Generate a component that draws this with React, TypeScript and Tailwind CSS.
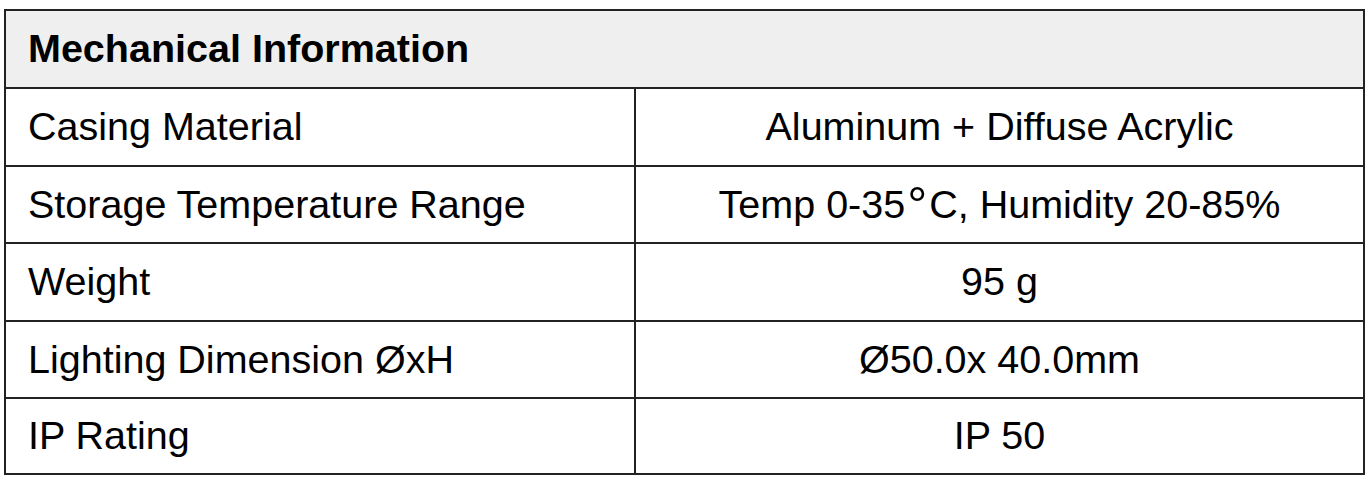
const rows: [string, React.ReactNode][] = [
  ["Casing Material", "Aluminum + Diffuse Acrylic"],
  [
    "Storage Temperature Range",
    <>
      Temp 0-35<span className="relative top-[4px] px-[2px] text-[50px] leading-none font-light">{"\u00b0"}</span>C, Humidity 20-85%
    </>,
  ],
  ["Weight", "95 g"],
  ["Lighting Dimension \u00d8xH", "\u00d850.0x 40.0mm"],
  ["IP Rating", "IP 50"],
];

export default function App() {
  return (
    <div className="h-[478px] w-[1368px] bg-white pl-[4px] pt-[9px] font-['Liberation_Sans',Arial,sans-serif] text-[39.5px] text-black">
      <div className="w-[1361px] border-2 border-[#222]">
        <div className="flex h-[78px] items-center border-b-2 border-[#222] bg-[#efefef] pl-[22px] font-bold">
          Mechanical Information
        </div>
        {rows.map(([k, v], i) => (
          <div
            key={k}
            className={
              i < rows.length - 1
                ? "grid h-[77.5px] grid-cols-[630px_1fr] border-b-2 border-[#222]"
                : "grid h-[74px] grid-cols-[630px_1fr]"
            }
          >
            <div className="flex items-center border-r-2 border-[#222] pl-[22px]">{k}</div>
            <div className="flex items-center justify-center">
              <span>{v}</span>
            </div>
          </div>
        ))}
      </div>
    </div>
  );
}
